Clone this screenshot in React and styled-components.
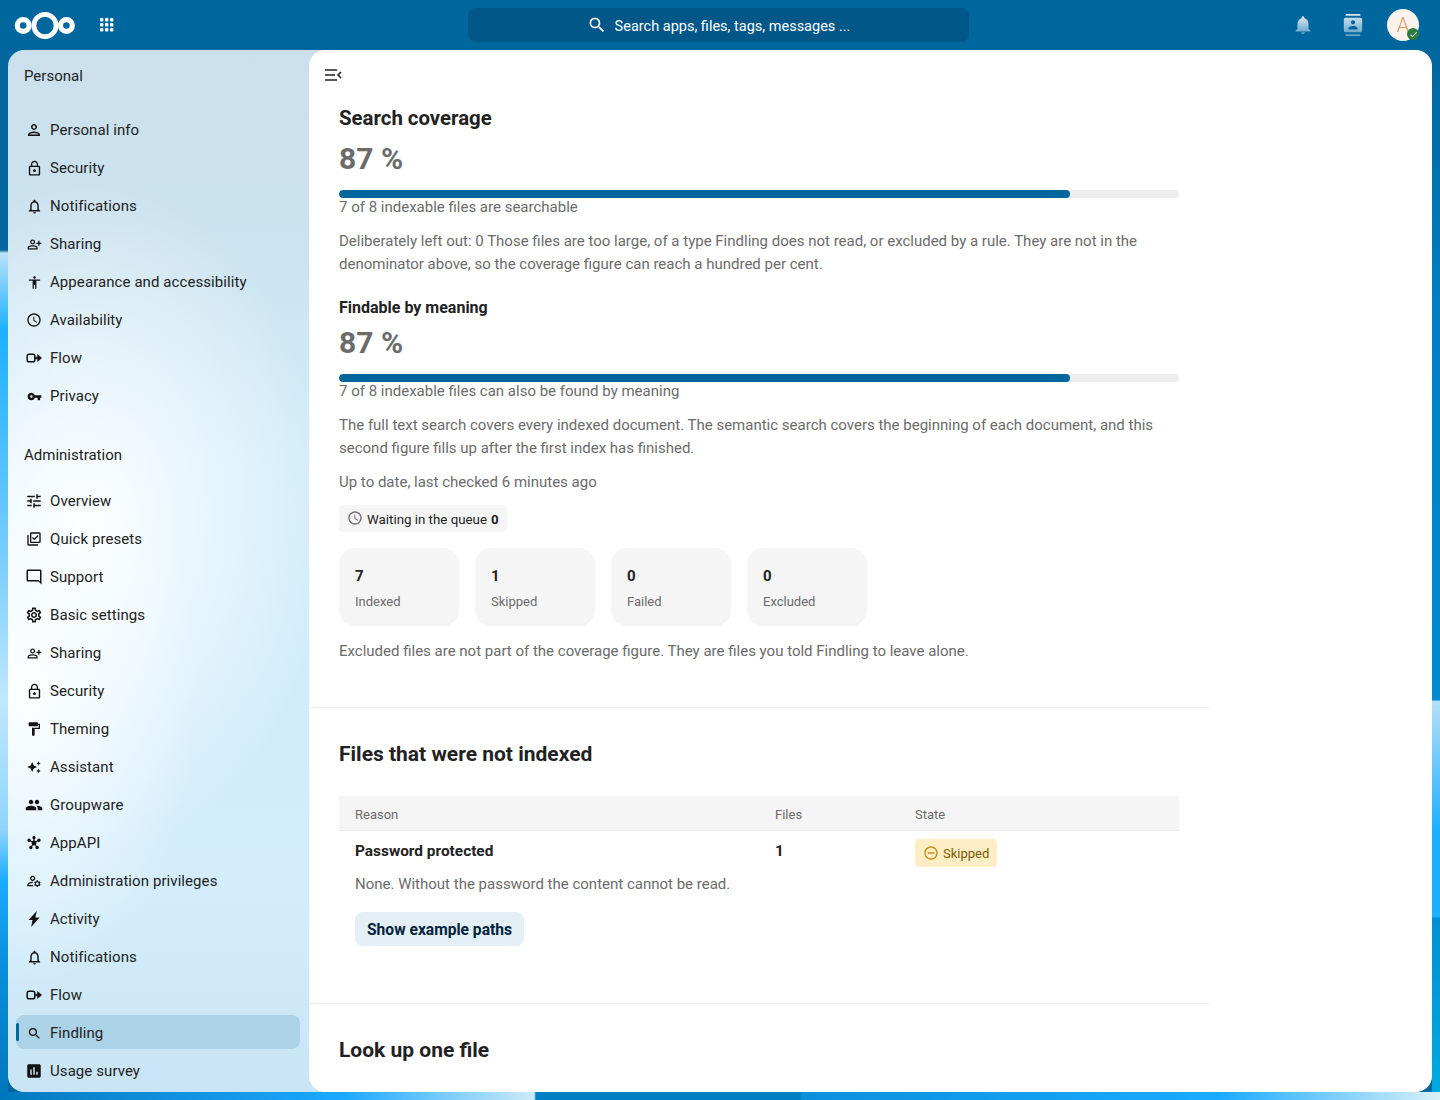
import React from "react";
import styled, { createGlobalStyle } from "styled-components";
import {
  MdOutlinePerson, MdLockOutline, MdOutlineNotifications, MdOutlinePersonAddAlt, MdAccessibility,
  MdOutlineSchedule, MdVpnKey, MdOutlineTune, MdOutlineLibraryAddCheck, MdChatBubbleOutline,
  MdOutlineSettings, MdFormatPaint, MdPeople, MdOutlineManageAccounts, MdSearch, MdAssessment,
  MdNotifications, MdContacts, MdOutlineDoNotDisturbOn, MdCheck,
} from "react-icons/md";

const GlobalStyle = createGlobalStyle`
  html, body {
    margin: 0;
    height: 100%;
    overflow: hidden;
  }
  body {
    font-family: Roboto, "Liberation Sans", sans-serif;
    font-size: 15px;
    color: #222;
  }
`;

// only the thin strips around the panels show the wallpaper
const Page = styled.div`
  height: 1100px;
  display: flex;
  flex-direction: column;
  box-sizing: border-box;
  padding: 0 8px 8px;
  overflow: hidden;
  background:
    linear-gradient(90deg, #0077bc 0, #0a80c8 55px, #1aa8ff 342px, #cdeaf8 534px, #0080c4 536px, #0080c4 800px, #0a90dc 802px, #1aabff 1219px, #d8f0f8 1440px) 0 100% / 100% 8px no-repeat,
    linear-gradient(180deg, #00679e 0, #00679e 250px, #b9e2f8 253px, #1cb0ff 330px, #7bcdfc 560px, #bfe8fd 700px, #8fd4fc 830px, #1cacff 880px, #0a90dc 960px, #0078bc 1092px) 0 0 / 8px 100% no-repeat,
    linear-gradient(180deg, #00679e 50px, #0080c4 329px, #008ad0 700px, #b5dff8 701px, #1eb0ff 830px, #1eb0ff 917px, #0090d0 918px, #00abdf 1100px) 100% 0 / 8px 100% no-repeat,
    #00679e;
`;

const Header = styled.header`
  height: 50px;
  flex: none;
  display: grid;
  grid-template-columns: 454px 501px 1fr;
  align-items: center;
  margin: 0 -8px;
  padding: 0 12px 0 14px;
`;

const HeaderLeft = styled.div`
  display: flex;
  align-items: center;
  gap: 23px;
`;

const HeaderRight = styled.div`
  display: flex;
  align-items: center;
  justify-content: flex-end;
`;

const SearchBar = styled.div`
  height: 34px;
  display: flex;
  align-items: center;
  justify-content: center;
  gap: 8px;
  border-radius: 8px;
  background: #005788;
  color: #fff;
  font-size: 14.5px;
`;

const SearchText = styled.span`
  padding-top: 2px;
`;

const HeaderIcon = styled.span`
  width: 50px;
  height: 50px;
  display: flex;
  align-items: center;
  justify-content: center;
  color: #fff;
  svg { fill: url(#headerFade); }
`;

const Avatar = styled.div`
  position: relative;
  width: 32px;
  height: 32px;
  margin: 0 9px;
  border-radius: 50%;
  background: #faf3ed;
  color: #d99a66;
  font-size: 20px;
  font-weight: 300;
  display: flex;
  align-items: center;
  justify-content: center;
`;

const StatusDot = styled.span`
  position: absolute;
  right: 0;
  bottom: 1px;
  width: 12px;
  height: 12px;
  border-radius: 50%;
  background: #2d7b41;
  color: #fff;
  display: flex;
  align-items: center;
  justify-content: center;
`;

const Body = styled.div`
  flex: 1;
  min-height: 0;
  display: flex;
`;

const Sidebar = styled.nav`
  width: 317px;
  margin-right: -16px;
  flex: none;
  box-sizing: border-box;
  padding: 0 25px 0 8px;
  border-radius: 16px 0 0 16px;
  overflow: hidden;
  background:
    radial-gradient(ellipse 240px 340px at 80px 470px, #fcfeff 0, rgba(252, 254, 255, 0) 100%),
    radial-gradient(ellipse 170px 300px at 20px 640px, #fbfeff 0, rgba(251, 254, 255, 0) 100%),
    linear-gradient(180deg, #cbe0ec 0, #cbe2ef 170px, #d2edfa 420px, #d0ecfb 700px, #d3edfc 840px, #c9e4f4 1042px);
`;

const Caption = styled.div`
  height: 34px;
  display: flex;
  align-items: center;
  padding-left: 8px;
  color: #222;
  margin-top: ${(p) => p.$top}px;
  margin-bottom: ${(p) => p.$bottom}px;
`;

const NavList = styled.ul`
  list-style: none;
  margin: 0;
  padding: 0;
  display: flex;
  flex-direction: column;
  gap: 4px;
`;

const NavItem = styled.li`
  position: relative;
  height: 34px;
  box-sizing: border-box;
  display: flex;
  align-items: center;
  gap: 7px;
  padding: 2px 0 0 9px;
  border-radius: 8px;
  color: #222;
  letter-spacing: 0.08px;
  background: ${(p) => (p.$active ? "#abd2e7" : "transparent")};
  ${(p) => p.$active && `
    &::before {
      content: "";
      position: absolute;
      left: 0;
      top: 8px;
      width: 3px;
      height: 18px;
      border-radius: 2px;
      background: #00679e;
    }
  `}
`;

const NavIcon = styled.span`
  width: 18px;
  height: 18px;
  flex: none;
  display: flex;
  align-items: center;
  justify-content: center;
`;

const Content = styled.main`
  flex: 1;
  min-width: 0;
  background: #fff;
  border-radius: 16px;
  overflow: hidden;
  position: relative;
  z-index: 1;
`;

const ToggleButton = styled.div`
  height: 50px;
  display: flex;
  align-items: center;
  padding-left: 14px;
`;

const Section = styled.section`
  width: 900px;
  box-sizing: border-box;
  padding: ${(p) => p.$pad};
  border-bottom: ${(p) => (p.$last ? "0" : "1px solid #ededed")};
`;

const Title = styled.h2`
  margin: 0;
  font-size: ${(p) => p.$size || 21}px;
  line-height: 30px;
  font-weight: 700;
  color: #222;
`;

const SubTitle = styled.h3`
  margin: 21px 0 -1px;
  font-size: 16px;
  line-height: 22px;
  font-weight: 700;
  color: #222;
`;

const Percent = styled.div`
  margin: ${(p) => p.$top || 6}px 0 12px;
  font-size: 30px;
  line-height: 38px;
  font-weight: 700;
  color: #6b6b6b;
`;

const Track = styled.div`
  height: 8px;
  border-radius: 4px;
  background: #ededed;
  overflow: hidden;
`;

const Fill = styled.div`
  height: 100%;
  border-radius: 4px;
  background: #00679e;
`;

const Muted = styled.p`
  margin: ${(p) => p.$margin || "0"};
  color: #6b6b6b;
  line-height: 23px;
`;

const QueueBadge = styled.div`
  width: fit-content;
  height: 27px;
  box-sizing: border-box;
  display: flex;
  align-items: center;
  gap: 4px;
  margin-top: 11px;
  padding: 1px 8px 0;
  border-radius: 4px;
  background: #f5f5f5;
  font-size: 13.3px;
  color: #222;
  svg { color: #6b6b6b; margin-top: -2px; }
  b { font-weight: 700; }
`;

const Cards = styled.div`
  display: flex;
  gap: 16px;
  margin-top: 16px;
`;

const Card = styled.div`
  width: 120px;
  height: 78px;
  box-sizing: border-box;
  padding: 16px;
  border-radius: 16px;
  background: #f5f5f5;
`;

const CardValue = styled.div`
  font-size: 15px;
  font-weight: 700;
  line-height: 24px;
  color: #222;
`;

const CardLabel = styled.div`
  font-size: 13px;
  line-height: 28px;
  color: #6b6b6b;
`;

const HeadRow = styled.div`
  display: grid;
  grid-template-columns: 420px 140px 1fr;
  align-items: center;
  height: 35px;
  box-sizing: border-box;
  margin-top: 27px;
  padding: 2px 16px 0;
  background: #f5f5f5;
  border-bottom: 1px solid #ededed;
  font-size: 13px;
  color: #6b6b6b;
`;

const BodyRow = styled.div`
  display: grid;
  grid-template-columns: 420px 140px 1fr;
  padding: 8px 16px 0;
  font-size: 15.4px;
  font-weight: 700;
  color: #222;
  line-height: 24px;
`;

const StateBadge = styled.span`
  width: fit-content;
  height: 28px;
  box-sizing: border-box;
  display: flex;
  align-items: center;
  gap: 4px;
  padding: 1px 8px 0;
  border-radius: 4px;
  background: #ffeec5;
  color: #7a5a00;
  font-size: 13px;
  font-weight: 400;
  svg { color: #c98a10; margin-top: -1px; }
`;

const RowNote = styled.p`
  margin: 0;
  padding: 6px 16px 0;
  line-height: 23px;
  color: #6b6b6b;
`;

const ActionButton = styled.button`
  display: block;
  margin: 16px 0 0 16px;
  height: 34px;
  padding: 2px 12px 0;
  border: 0;
  border-radius: 8px;
  background: #e3eef5;
  color: #00233a;
  font: 700 15.6px Roboto, "Liberation Sans", sans-serif;
`;

const Logo = () => (
  <svg width="62" height="30" viewBox="0 0 62 30" fill="none" stroke="#fff">
    <circle cx="9.2" cy="15.5" r="5.9" strokeWidth="5.2" />
    <circle cx="31" cy="15.5" r="11.1" strokeWidth="4.8" />
    <circle cx="52.4" cy="15.5" r="5.9" strokeWidth="5.2" />
  </svg>
);

const AppsIcon = () => (
  <svg width="16" height="16" viewBox="0 0 16 16" fill="#fff">
    {[1, 6, 11].map((y) => [1, 6, 11].map((x) => <rect key={`${x}-${y}`} x={x} y={y} width="3.4" height="3.4" rx="1" />))}
  </svg>
);

const FlowIcon = () => (
  <svg width="18" height="18" viewBox="0 0 18 18" fill="none" stroke="#111" strokeWidth="1.5">
    <rect x="2.2" y="5.2" width="7.6" height="7.6" rx="1.8" />
    <path d="M10 8.2h2.6V5.6L16.6 9l-4 3.4V9.8H10z" fill="#111" strokeWidth="0.6" strokeLinejoin="round" />
  </svg>
);

const SparkleIcon = () => (
  <svg width="18" height="18" viewBox="0 0 20 20" fill="#111">
    <path d="M8 4.5 9.7 8.3 13.5 10 9.7 11.7 8 15.5 6.3 11.7 2.5 10 6.3 8.3z" />
    <path d="M15 3.5l.8 1.7 1.7.8-1.7.8-.8 1.7-.8-1.7-1.7-.8 1.7-.8zM15 12l.8 1.7 1.7.8-1.7.8-.8 1.7-.8-1.7-1.7-.8 1.7-.8z" />
  </svg>
);

const AppApiIcon = () => (
  <svg width="18" height="18" viewBox="0 0 20 20" fill="#111" stroke="#111" strokeWidth="1.4">
    <path d="M10 10 5 7M10 10l5-3M10 10 6.5 15M10 10l3.5 5M10 10V4.5" />
    <circle cx="10" cy="10" r="2" />
    <circle cx="4.5" cy="7" r="1.2" />
    <circle cx="15.5" cy="7" r="1.2" />
    <circle cx="6.5" cy="15" r="1.2" />
    <circle cx="13.5" cy="15" r="1.2" />
    <circle cx="10" cy="4" r="1.2" />
  </svg>
);

const BoltIcon = () => (
  <svg width="18" height="18" viewBox="0 0 18 18" fill="#111">
    <path d="M11.8 1 3.5 10h4L6.2 17l8.3-9.5h-4.2z" />
  </svg>
);

const ToggleIcon = () => (
  <svg width="20" height="20" viewBox="0 0 20 20" fill="none" stroke="#222" strokeWidth="1.6">
    <path d="M2 5h12M2 10h10M2 15h12M18 7l-3 3 3 3" />
  </svg>
);

const FlippedChat = styled(MdChatBubbleOutline)`
  transform: scaleX(-1);
`;

const icon = (I, size = 18) => <I size={size} color="#111" />;

const personal = [
  ["Personal info", icon(MdOutlinePerson, 20)],
  ["Security", icon(MdLockOutline, 17)],
  ["Notifications", icon(MdOutlineNotifications, 17)],
  ["Sharing", icon(MdOutlinePersonAddAlt, 15)],
  ["Appearance and accessibility", icon(MdAccessibility, 15)],
  ["Availability", icon(MdOutlineSchedule, 16)],
  ["Flow", <FlowIcon />],
  ["Privacy", icon(MdVpnKey, 15)],
];

const admin = [
  ["Overview", icon(MdOutlineTune)],
  ["Quick presets", icon(MdOutlineLibraryAddCheck, 16)],
  ["Support", <FlippedChat size={18} color="#111" />],
  ["Basic settings", icon(MdOutlineSettings)],
  ["Sharing", icon(MdOutlinePersonAddAlt, 15)],
  ["Security", icon(MdLockOutline, 17)],
  ["Theming", icon(MdFormatPaint, 16)],
  ["Assistant", <SparkleIcon />],
  ["Groupware", icon(MdPeople)],
  ["AppAPI", <AppApiIcon />],
  ["Administration privileges", icon(MdOutlineManageAccounts, 16)],
  ["Activity", <BoltIcon />],
  ["Notifications", icon(MdOutlineNotifications, 17)],
  ["Flow", <FlowIcon />],
  ["Findling", icon(MdSearch, 15), true],
  ["Usage survey", icon(MdAssessment)],
];

const stats = [
  ["7", "Indexed"],
  ["1", "Skipped"],
  ["0", "Failed"],
  ["0", "Excluded"],
];

const NavGroup = ({ items }) => (
  <NavList>
    {items.map(([label, glyph, active]) => (
      <NavItem key={label} $active={active}>
        <NavIcon>{glyph}</NavIcon>
        {label}
      </NavItem>
    ))}
  </NavList>
);

const Progress = ({ value }) => (
  <Track>
    <Fill style={{ width: `${value}%` }} />
  </Track>
);

export default function App() {
  return (
    <Page>
      <GlobalStyle />
      <svg width="0" height="0" style={{ position: "absolute" }}>
        <defs>
          <linearGradient id="headerFade" x1="0" y1="0" x2="0" y2="1">
            <stop offset="0" stopColor="#dbe9f2" />
            <stop offset="1" stopColor="#5d9fc6" />
          </linearGradient>
        </defs>
      </svg>
      <Header>
        <HeaderLeft>
          <Logo />
          <AppsIcon />
        </HeaderLeft>
        <SearchBar>
          <MdSearch size={20} />
          <SearchText>Search apps, files, tags, messages ...</SearchText>
        </SearchBar>
        <HeaderRight>
          <HeaderIcon><MdNotifications size={22} /></HeaderIcon>
          <HeaderIcon><MdContacts size={22} /></HeaderIcon>
          <Avatar>
            A
            <StatusDot><MdCheck size={9} /></StatusDot>
          </Avatar>
        </HeaderRight>
      </Header>
      <Body>
        <Sidebar>
          <Caption $top={9} $bottom={19}>Personal</Caption>
          <NavGroup items={personal} />
          <Caption $top={26} $bottom={11}>Administration</Caption>
          <NavGroup items={admin} />
        </Sidebar>
        <Content>
          <ToggleButton><ToggleIcon /></ToggleButton>
          <Section $pad="3px 30px 44px">
            <Title $size={20.4}>Search coverage</Title>
            <Percent $top={7}>87 %</Percent>
            <Progress value={87} />
            <Muted $margin="-2px 0 0">7 of 8 indexable files are searchable</Muted>
            <Muted $margin="11px 0 0">
              Deliberately left out: 0 Those files are too large, of a type Findling does not read, or excluded by a rule. They are not in the denominator above, so the coverage figure can reach a hundred per cent.
            </Muted>
            <SubTitle>Findable by meaning</SubTitle>
            <Percent>87 %</Percent>
            <Progress value={87} />
            <Muted $margin="-2px 0 0">7 of 8 indexable files can also be found by meaning</Muted>
            <Muted $margin="11px 0 0">
              The full text search covers every indexed document. The semantic search covers the beginning of each document, and this second figure fills up after the first index has finished.
            </Muted>
            <Muted $margin="11px 0 0">Up to date, last checked 6 minutes ago</Muted>
            <QueueBadge>
              <MdOutlineSchedule size={16} />
              Waiting in the queue <b>0</b>
            </QueueBadge>
            <Cards>
              {stats.map(([value, label]) => (
                <Card key={label}>
                  <CardValue>{value}</CardValue>
                  <CardLabel>{label}</CardLabel>
                </Card>
              ))}
            </Cards>
            <Muted $margin="14px 0 0">Excluded files are not part of the coverage figure. They are files you told Findling to leave alone.</Muted>
          </Section>
          <Section $pad="31px 30px 57px">
            <Title>Files that were not indexed</Title>
            <HeadRow>
              <span>Reason</span>
              <span>Files</span>
              <span>State</span>
            </HeadRow>
            <BodyRow>
              <span>Password protected</span>
              <span>1</span>
              <StateBadge><MdOutlineDoNotDisturbOn size={16} />Skipped</StateBadge>
            </BodyRow>
            <RowNote>None. Without the password the content cannot be read.</RowNote>
            <ActionButton>Show example paths</ActionButton>
          </Section>
          <Section $pad="31px 30px" $last>
            <Title>Look up one file</Title>
          </Section>
        </Content>
      </Body>
    </Page>
  );
}
